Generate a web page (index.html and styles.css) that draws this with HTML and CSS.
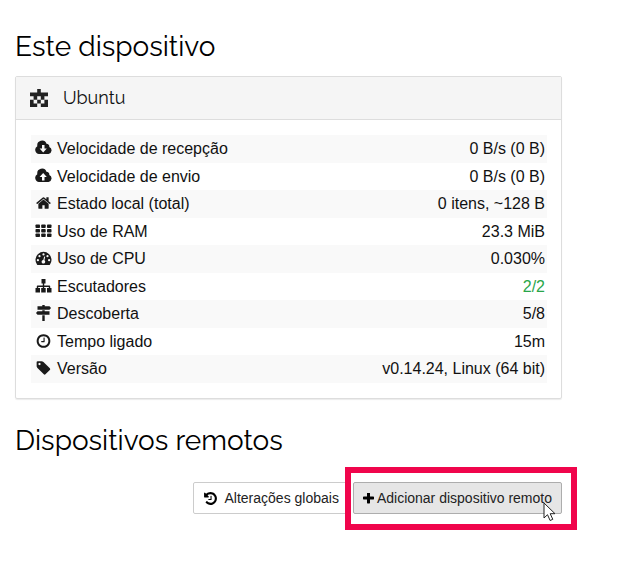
FILE: index.html
```
<!DOCTYPE html>
<html lang="pt">
<head>
  <meta charset="UTF-8">
  <meta name="viewport" content="width=device-width, initial-scale=1">
  <title>Ubuntu | Syncthing</title>
  <link rel="stylesheet" href="styles.css">
</head>
<body>

  <main class="container">
    <h3>Este dispositivo</h3>

    <div class="panel">
      <div class="panel-heading">
        <svg class="identicon" viewBox="0 0 5 5">
          <path d="M2 0h1v1H2zM0 1h5v1H0zM1 2h1v1H1zM3 2h1v1H3zM0 3h1v1H0zM2 3h1v1H2zM4 3h1v1H4zM0 4h2v1H0zM3 4h2v1H3z"/>
        </svg>
        <h4>Ubuntu</h4>
      </div>
      <div class="panel-body">
        <table class="stats">
          <tr>
            <th scope="row"><svg class="icon" viewBox="0 0 17 16"><path fill-rule="evenodd" d="M4 14A4.200 4.200 0 0 1 2.300 6.200A4.800 4.800 0 0 1 11.500 3.700A2.900 2.900 0 0 1 14.300 7.100A3.600 3.600 0 0 1 13.500 14zM7 5V8.500H4.600L8.200 12.500L11.800 8.500H9.500V5z"/></svg>Velocidade de recepção</th>
            <td>0 B/s (0 B)</td>
          </tr>
          <tr>
            <th scope="row"><svg class="icon" viewBox="0 0 17 16"><path fill-rule="evenodd" d="M4 14A4.200 4.200 0 0 1 2.300 6.200A4.800 4.800 0 0 1 11.500 3.700A2.900 2.900 0 0 1 14.300 7.100A3.600 3.600 0 0 1 13.500 14zM7 12.500V9H4.600L8.200 5L11.800 9H9.500V12.500z"/></svg>Velocidade de envio</th>
            <td>0 B/s (0 B)</td>
          </tr>
          <tr>
            <th scope="row"><svg class="icon" viewBox="0 0 1792 1792"><path d="M1472 992v480q0 26-19 45t-45 19h-384v-384h-256v384h-384q-26 0-45-19t-19-45v-480q0-1 .5-3t.5-3l575-474 575 474q1 2 1 6zm223-69l-62 74q-8 9-21 11h-3q-13 0-21-7l-692-577-692 577q-12 8-24 7-13-2-21-11l-62-74q-8-10-7-23.500t11-21.500l719-599q32-26 76-26t76 26l244 204v-195q0-14 9-23t23-9h192q14 0 23 9t9 23v408l219 182q10 8 11 21.500t-7 23.500z"/></svg>Estado local (total)</th>
            <td>0 itens, ~128 B</td>
          </tr>
          <tr>
            <th scope="row"><svg class="icon" viewBox="0 0 17 16"><rect x="0.500" y="1.500" width="4.500" height="3.500" rx=".8"/><rect x="6.200" y="1.500" width="4.500" height="3.500" rx=".8"/><rect x="12" y="1.500" width="4.500" height="3.500" rx=".8"/><rect x="0.500" y="6" width="4.500" height="3.500" rx=".8"/><rect x="6.200" y="6" width="4.500" height="3.500" rx=".8"/><rect x="12" y="6" width="4.500" height="3.500" rx=".8"/><rect x="0.500" y="10.500" width="4.500" height="3.500" rx=".8"/><rect x="6.200" y="10.500" width="4.500" height="3.500" rx=".8"/><rect x="12" y="10.500" width="4.500" height="3.500" rx=".8"/></svg>Uso de RAM</th>
            <td>23.3 MiB</td>
          </tr>
          <tr>
            <th scope="row"><svg class="icon" viewBox="0 0 17 16"><path d="M2 14.500A8 8 0 1 1 15 14.500Q14.800 15 14 15H3Q2.200 15 2 14.500z"/><g class="cut"><circle cx="2.900" cy="10.200" r="1.100"/><circle cx="4.500" cy="6.200" r="1.100"/><circle cx="8.500" cy="4.400" r="1.100"/><circle cx="12.500" cy="6.200" r="1.100"/><circle cx="14.100" cy="10.200" r="1.100"/><path d="M9.200 6.500L10.200 6.800L9.400 10.300A1.800 1.800 0 1 1 8.300 10z"/></g></svg>Uso de CPU</th>
            <td>0.030%</td>
          </tr>
          <tr>
            <th scope="row"><svg class="icon" viewBox="0 0 17 16"><path d="M6.500 1h4v4.500H9.200v2h5.300q.7 0 .7.700V10h1.300v4.500h-4.500V10h1.800V9H9.200v1h1.500v4.500H6.200V10h1.600V9H3.200v1H5v4.500H.5V10h1.300V8.200q0-.7.700-.7h5.300v-2H6.500z"/></svg>Escutadores</th>
            <td class="text-success">2/2</td>
          </tr>
          <tr>
            <th scope="row"><svg class="icon" viewBox="0 0 17 16"><path d="M7.300 0h2.400v1.300h4.800L16 3l-1.500 1.700H2.500V1.300h4.800zM7.300 5.300h2.400v1h4.800v3.400h-12L1 8l1.500-1.700h4.800zM7.300 10.300h2.400V16H7.300z"/></svg>Descoberta</th>
            <td>5/8</td>
          </tr>
          <tr>
            <th scope="row"><svg class="icon" viewBox="0 0 1792 1792"><path d="M1024 544v448q0 14-9 23t-23 9h-320q-14 0-23-9t-9-23v-64q0-14 9-23t23-9h224v-352q0-14 9-23t23-9h64q14 0 23 9t9 23zm416 352q0-148-73-273t-198-198-273-73-273 73-198 198-73 273 73 273 198 198 273 73 273-73 198-198 73-273zm224 0q0 209-103 385.500t-279.500 279.500-385.500 103-385.500-103-279.500-279.500-103-385.500 103-385.500 279.500-279.500 385.500-103 385.500 103 279.500 279.500 103 385.500z"/></svg>Tempo ligado</th>
            <td>15m</td>
          </tr>
          <tr>
            <th scope="row"><svg class="icon" viewBox="0 0 1792 1792"><path d="M576 448q0-53-37.500-90.500t-90.500-37.500-90.500 37.500-37.500 90.500 37.500 90.500 90.500 37.500 90.500-37.500 37.500-90.500zm1067 576q0 53-37 90l-491 492q-39 37-91 37-53 0-90-37l-715-716q-38-37-64.500-101t-26.500-117v-416q0-52 38-90t90-38h416q53 0 117 26.500t102 64.500l715 714q37 39 37 91z"/></svg>Versão</th>
            <td>v0.14.24, Linux (64 bit)</td>
          </tr>
        </table>
      </div>
    </div>

    <h3>Dispositivos remotos</h3>

    <div class="actions">
      <button type="button" class="btn">
        <svg viewBox="0 0 1792 1792"><path d="M1664 896q0 156-61 298t-164 245-245 164-298 61q-172 0-327-72.500t-264-204.500q-7-10-6.500-22.500t8.500-20.500l137-138q10-9 25-9 16 2 23 12 73 95 179 147t225 52q104 0 198.500-40.500t163.500-109.500 109.500-163.500 40.500-198.500-40.500-198.500-109.500-163.500-163.500-109.500-198.500-40.500q-98 0-188 35.500t-160 101.500l137 138q31 30 14 69-17 40-59 40h-448q-26 0-45-19t-19-45v-448q0-42 40-59 39-17 69 14l130 129q107-101 244.500-156.500t284.500-55.500q156 0 298 61t245 164 164 245 61 298zm-640-288v448q0 14-9 23t-23 9h-320q-14 0-23-9t-9-23v-64q0-14 9-23t23-9h224v-352q0-14 9-23t23-9h64q14 0 23 9t9 23z"/></svg>
        Alterações globais
      </button>
      <div class="highlight">
        <button type="button" class="btn btn-active">
          <svg viewBox="192 192 1408 1408"><path d="M1600 736v192q0 40-28 68t-68 28h-416v416q0 40-28 68t-68 28h-192q-40 0-68-28t-28-68v-416h-416q-40 0-68-28t-28-68v-192q0-40 28-68t68-28h416v-416q0-40 28-68t68-28h192q40 0 68 28t28 68v416h416q40 0 68 28t28 68z"/></svg>
          Adicionar dispositivo remoto
        </button>
        <svg class="cursor" viewBox="0 0 13 20"><path d="M1 1v15l3.500-3.300 2.600 5.800 2.700-1.200-2.600-5.600H12z"/></svg>
      </div>
    </div>
  </main>

</body>
</html>
```
FILE: styles.css
```
* {
  box-sizing: border-box;
}

body {
  margin: 0;
  background: #fff;
  color: #111;
  font-family: "Liberation Sans", Arial, sans-serif;
  font-size: 16px;
  line-height: 20px;
}

.container {
  padding: 31px 78px 30px 15px;
}

h3, h4 {
  margin: 0;
  font-family: Raleway, Lato, sans-serif;
  font-weight: 400;
}

h3 {
  color: #000;
  font-size: 28px;
  line-height: 32px;
}

h4 {
  font-size: 18px;
  line-height: 20px;
}

.panel {
  margin: 13px 0 26px;
  border: 1px solid #ddd;
  border-radius: 2px;
  box-shadow: 0 1px 1px rgba(0, 0, 0, 0.08);
}

.panel-heading {
  display: flex;
  align-items: center;
  gap: 15px;
  padding: 11px 14px;
  border-bottom: 1px solid #ddd;
  background: #f5f5f5;
}

.identicon {
  width: 18px;
  height: 18px;
  fill: #222;
}

.panel-body {
  padding: 15px 14px 15px 15px;
}

.stats {
  width: 100%;
  border-collapse: collapse;
}

.stats th,
.stats td {
  padding: 4px 2px;
  font-weight: 400;
}

.stats th {
  text-align: left;
}

.stats td {
  text-align: right;
}

.stats tr:nth-child(odd) {
  background: #f9f9f9;
}

.stats tr:nth-child(even) > * {
  padding-bottom: 3px;
}

.stats .text-success {
  color: #29a649;
}

.icon {
  width: 17px;
  height: 16px;
  margin: 0 5px 0 2px;
  vertical-align: -2px;
  fill: #1a1a1a;
}

.cut {
  fill: #f9f9f9;
}

.actions {
  display: flex;
  justify-content: flex-end;
  gap: 4px;
  margin-top: 25px;
}

.btn {
  display: flex;
  align-items: center;
  gap: 7px;
  padding: 5px 9px;
  border: 1px solid #ccc;
  border-radius: 2px;
  background: #fff;
  color: #222;
  font-family: inherit;
  font-size: 14px;
  line-height: 20px;
  white-space: nowrap;
  cursor: pointer;
}

.btn svg {
  width: 15px;
  height: 15px;
}

.btn-active {
  gap: 3px;
  border-color: #adadad;
  background: #e6e6e6;
}

.btn-active svg {
  width: 11px;
  height: 11px;
}

.highlight {
  position: relative;
}

/* red frame around the button */
.highlight::after {
  content: "";
  position: absolute;
  inset: -15px -15px -16px -8px;
  border: 6px solid #f0054c;
  pointer-events: none;
}

.cursor {
  position: absolute;
  right: 6px;
  bottom: -8px;
  width: 13px;
  height: 20px;
  fill: #fff;
  stroke: #222;
}
```
